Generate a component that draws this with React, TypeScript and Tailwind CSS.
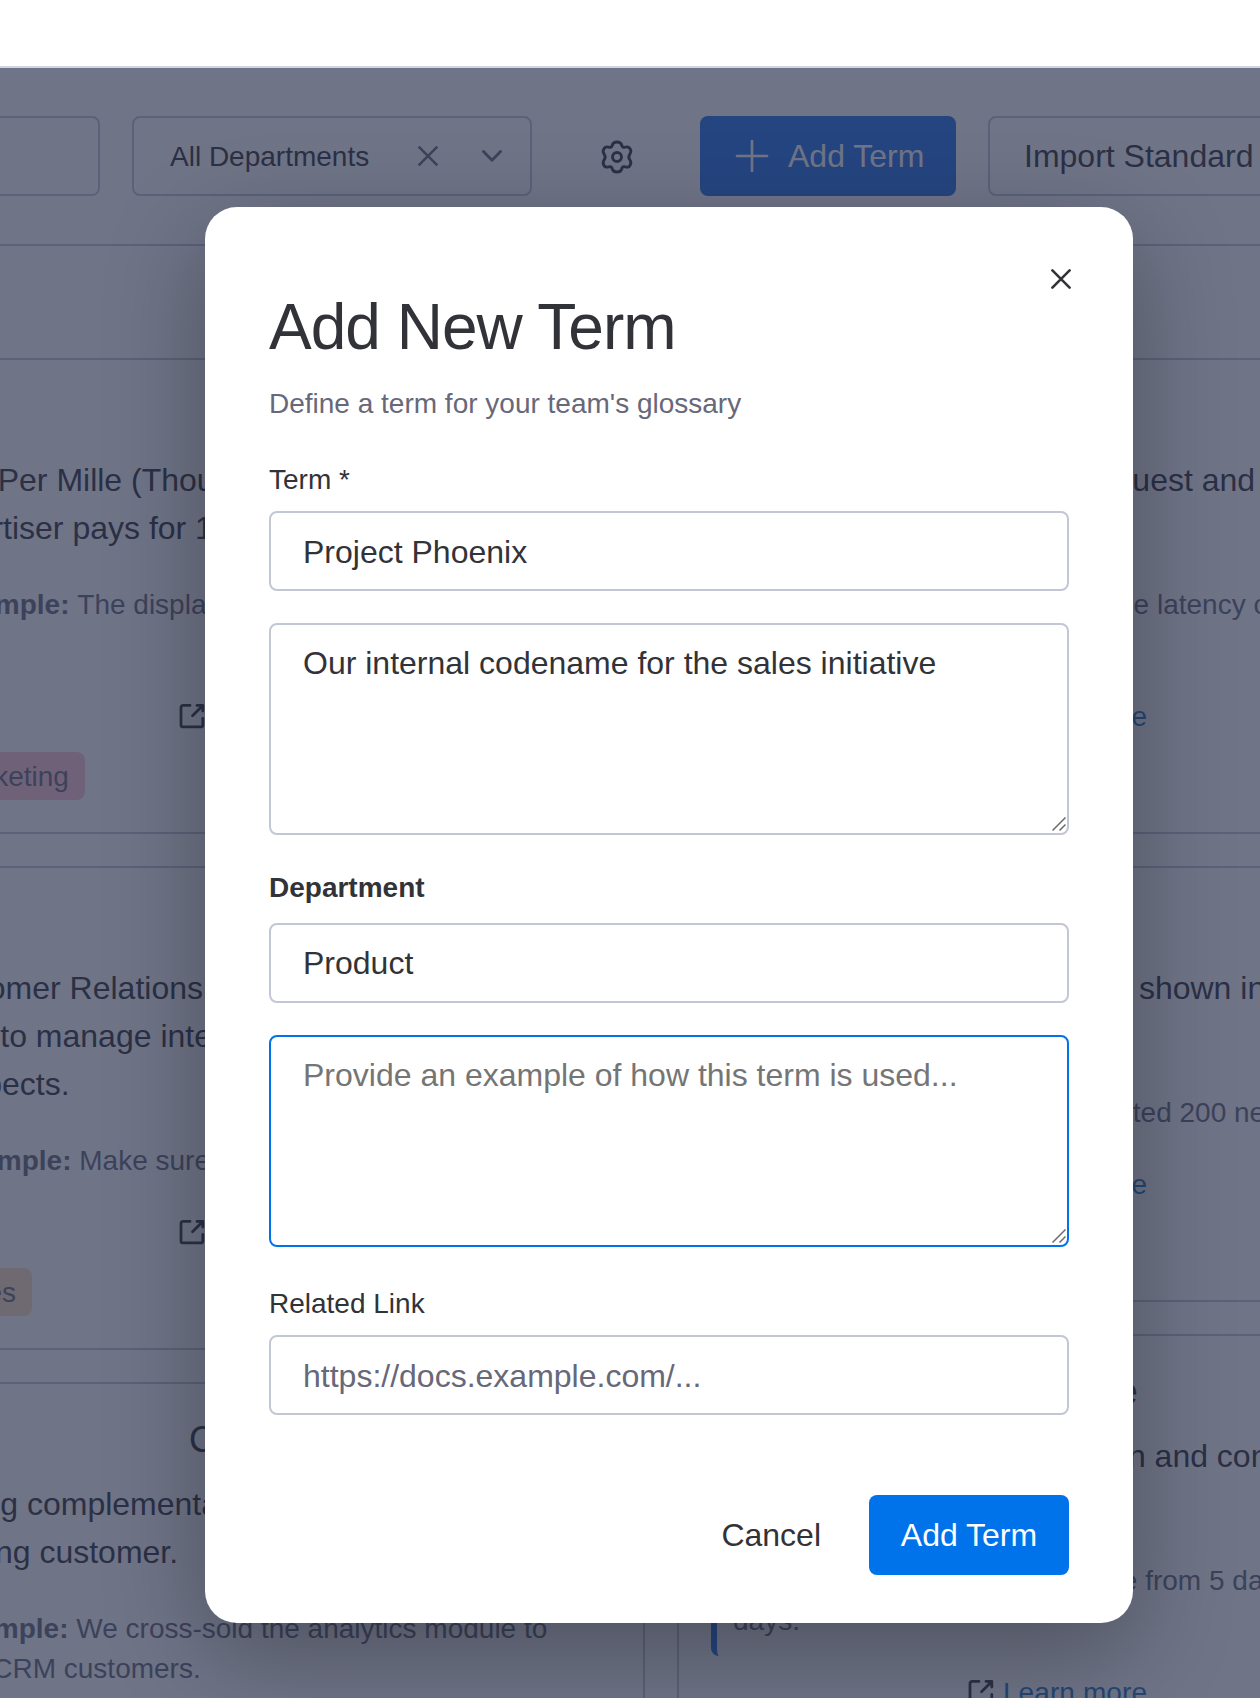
import React from 'react';

const CloseIcon = ({ className }: { className?: string }) => (
  <svg viewBox="0 0 20 20" className={className} fill="none" stroke="currentColor" strokeWidth="2.6" strokeLinecap="round">
    <path d="M1.4 1.4 18.6 18.6M18.6 1.4 1.4 18.6" />
  </svg>
);

const ExternalIcon = () => (
  <svg viewBox="0 0 40 40" className="-mr-1 size-10 shrink-0 text-[#323338]" fill="none" stroke="currentColor" strokeWidth="2.8" strokeLinecap="round" strokeLinejoin="round">
    <path d="M12 9.4H5a2 2 0 0 0-2 2v17.5a2 2 0 0 0 2 2h17.8a2 2 0 0 0 2-2v-6.5" />
    <path d="M19 9.4h5.8v5.6M24.5 9.7 14.5 19.7" />
  </svg>
);

const GearIcon = () => (
  <svg viewBox="-20 -20 40 40" className="size-10 translate-x-px translate-y-px" fill="none" stroke="currentColor" strokeWidth="2.9" strokeLinejoin="round">
    <path d="M0-15C2.4-15 4.3-13.6 4.8-11.6C5.2-9.8 6.6-9.3 8.4-9.9C10.4-10.5 12.4-9.6 13.3-7.8C14.2-6 13.9-4.4 12.9-3C11.6-1.2 11.6 1.2 12.9 3C13.9 4.4 14.2 6 13.3 7.8C12.4 9.6 10.4 10.5 8.4 9.9C6.6 9.3 5.2 9.8 4.8 11.6C4.3 13.6 2.4 15 0 15C-2.4 15-4.3 13.6-4.8 11.6C-5.2 9.8-6.6 9.3-8.4 9.9C-10.4 10.5-12.4 9.6-13.3 7.8C-14.2 6-13.9 4.4-12.9 3C-11.6 1.2-11.6-1.2-12.9-3C-13.9-4.4-14.2-6-13.3-7.8C-12.4-9.6-10.4-10.5-8.4-9.9C-6.6-9.3-5.2-9.8-4.8-11.6C-4.3-13.6-2.4-15 0-15Z" />
    <circle r="4.5" />
  </svg>
);

const ResizeHandle = () => (
  <svg viewBox="0 0 14 14" className="pointer-events-none absolute right-[3px] bottom-1 size-3.5" fill="none" stroke="#6b6b6b" strokeWidth="1.5">
    <path d="M.5 13.5 13.5.5M7.5 13.5 13.5 7.5" />
  </svg>
);

interface TermCardProps {
  title?: string;
  lines: string[];
  example: string[];
  tag: string;
  tagClass: string;
  bodyClass?: string;
  exampleClass?: string;
}

const TermCard = ({ title, lines, example, tag, tagClass, bodyClass = '', exampleClass = 'mb-4' }: TermCardProps) => (
  <article className="border-2 border-[#c3c6d4] p-8 whitespace-nowrap">
    <h2 className="h-12 text-center text-4xl leading-[48px] tracking-[-0.5px] text-[#323338]">{title}</h2>
    <div className={`mt-4 text-[32px] leading-[48px] text-[#323338] ${bodyClass}`}>
      {lines.map((line) => (
        <p key={line} className="h-12">{line}</p>
      ))}
    </div>
    <blockquote className={`mt-4 rounded-lg border-l-[6px] border-[#2070e8] pt-[17px] pb-[15px] pl-4 text-[28px] leading-10 text-[#676879] ${exampleClass}`}>
      {example.map((line, i) => (
        <p key={line} className="h-10">
          {i === 0 && <strong>Example: </strong>}
          {line}
        </p>
      ))}
    </blockquote>
    <div className="flex h-10 items-center justify-center pl-[3px] text-[28px]">
      <ExternalIcon />
      <a className="pt-0.5 leading-[38px] tracking-[0.1px] text-[#1f76c2]">Learn more</a>
    </div>
    <span className={`mt-4 ml-2 inline-block h-12 rounded-lg px-4 pt-px text-[28px] leading-[47px] text-[#676879] ${tagClass}`}>{tag}</span>
  </article>
);

const GlossaryPage = () => (
  <div>
    <div className="flex h-[178px] items-start border-b-2 border-[#c3c6d4] pt-12 whitespace-nowrap">
      <div className="h-20 w-[100px] shrink-0 rounded-r-lg border-2 border-l-0 border-[#c3c6d4]" />
      <div className="ml-8 flex h-20 w-[400px] shrink-0 items-center rounded-lg border-2 border-[#c3c6d4] pl-9 text-[28px] text-[#323338]">
        <span className="w-[248px] pt-0.5">All Departments</span>
        <CloseIcon className="size-5 text-[#676879]" />
        <svg viewBox="0 0 20 12" className="ml-11 h-3 w-5 text-[#676879]" fill="none" stroke="currentColor" strokeWidth="2.8" strokeLinecap="round" strokeLinejoin="round">
          <path d="M1.5 1.5 10 10.2 18.5 1.5" />
        </svg>
      </div>
      <div className="ml-16 flex h-20 w-10 shrink-0 items-center text-[#323338]">
        <GearIcon />
      </div>
      <button className="ml-16 flex h-20 w-64 shrink-0 items-center gap-4 rounded-lg bg-[#2070e8] px-8 text-[32px] text-white">
        <svg viewBox="0 0 40 40" className="size-10 shrink-0" fill="none" stroke="currentColor" strokeWidth="2.6" strokeLinecap="round">
          <path d="M20 5v30M5 20h30" />
        </svg>
        Add Term
      </button>
      <button className="ml-8 h-20 shrink-0 rounded-lg border-2 border-[#c3c6d4] px-[34px] text-[32px] text-[#323338]">Import Standard Terms</button>
    </div>
    <div className="-ml-[112px] mt-28 grid w-[1546px] grid-cols-2 items-start gap-8">
      <div className="flex flex-col gap-8">
        <TermCard
          lines={['Cost Per Mille (Thousand), the amount', 'advertiser pays for 1,000 impressions.']}
          example={['The display campaign had a low CPM.']}
          bodyClass="indent-px"
          exampleClass="mb-14 indent-px"
          tag="Marketing"
          tagClass="bg-[#ffc9d1]"
        />
        <TermCard
          lines={['Customer Relationship Management,', 'used to manage interactions with all', 'prospects.']}
          example={['Make sure to log the call.']}
          exampleClass="mb-4 indent-[3px]"
          tag="Sales"
          tagClass="bg-[#ffe0bf]"
        />
        <TermCard
          title="Cross-sell"
          lines={['Selling complementary products to an', 'existing customer.']}
          example={['We cross-sold the analytics module to', 'our CRM customers.']}
          tag="Sales"
          tagClass="bg-[#ffe0bf]"
        />
      </div>
      <div className="flex flex-col gap-8">
        <TermCard
          lines={['The time between a user request and', 'its response.']}
          bodyClass="indent-[14px]"
          example={['We further reduced the latency of our']}
          exampleClass="mb-14 indent-[-2px]"
          tag="Engineering"
          tagClass="bg-[#cce5ff]"
        />
        <TermCard
          lines={['A single time that an advert is shown in', 'front of a user.']}
          bodyClass="indent-px"
          example={['The ad quickly generated 200 new']}
          exampleClass="mb-4 indent-[-8px]"
          tag="Marketing"
          tagClass="bg-[#ffc9d1]"
        />
        <TermCard
          title="Lead Time"
          lines={['The time between introduction and conversion', 'of a task.']}
          bodyClass="indent-[6px]"
          example={['We cut our cycle time from 5 days to 3', 'days.']}
          exampleClass="mb-4 [&>p:first-child]:indent-[5px]"
          tag="Product"
          tagClass="bg-[#cce5ff]"
        />
      </div>
    </div>
  </div>
);

const field = 'block w-full rounded-lg border-2 bg-white px-8 text-[32px] text-[#323338] outline-none';

const AddTermModal = () => (
  <div className="absolute left-[205px] top-[207px] flex h-[1416px] w-[928px] flex-col rounded-[32px] bg-white px-16 shadow-[0_30px_100px_rgba(0,0,0,0.3)]">
    <button className="absolute right-[62px] top-[62px] text-[#323338]">
      <CloseIcon className="size-5" />
    </button>
    <h1 className="mt-20 h-20 text-[64px] leading-[80px] tracking-[-1px] text-[#323338]">Add New Term</h1>
    <p className="mt-[17px] h-10 text-[28px] leading-10 text-[#676879]">Define a term for your team's glossary</p>
    <label className="mt-9 h-10 text-[28px] leading-10 text-[#323338]">Term *</label>
    <input className={`${field} mt-[11px] h-20 border-[#c3c6d4] pt-[3px]`} defaultValue="Project Phoenix" />
    <div className="relative mt-8">
      <textarea className={`${field} h-[212px] resize-none border-[#c3c6d4] py-4 leading-[44px]`} defaultValue="Our internal codename for the sales initiative" />
      <ResizeHandle />
    </div>
    <label className="mt-[33px] h-10 text-[28px] font-bold leading-10 text-[#323338]">Department</label>
    <input className={`${field} mt-[15px] h-20 border-[#c3c6d4]`} defaultValue="Product" />
    <div className="relative mt-8">
      <textarea className={`${field} h-[212px] resize-none border-[#0073ea] py-4 leading-[44px] placeholder:text-[#757575]`} placeholder="Provide an example of how this term is used..." />
      <ResizeHandle />
    </div>
    <label className="mt-[37px] h-10 text-[28px] leading-10 text-[#323338]">Related Link</label>
    <input className={`${field} mt-[11px] h-20 border-[#c3c6d4] pt-[3px] placeholder:text-[#676879]`} placeholder="https://docs.example.com/..." />
    <div className="mt-20 flex h-20 justify-end gap-4 text-[32px]">
      <button className="px-8 text-[#323338]">Cancel</button>
      <button className="w-[200px] rounded-lg bg-[#0073ea] text-white">Add Term</button>
    </div>
  </div>
);

const App: React.FC = () => {
  return (
    <div className="relative h-[1698px] w-[1260px] overflow-hidden bg-white font-['Liberation_Sans',Arial,sans-serif]">
      <header className="h-[68px] border-b-2 border-[#d0d4e4] bg-white" />
      <main className="relative h-[1630px] overflow-hidden">
        <GlossaryPage />
        <div className="absolute inset-0 bg-[#292f4c]/67" />
      </main>
      <AddTermModal />
    </div>
  );
};

export default App;
